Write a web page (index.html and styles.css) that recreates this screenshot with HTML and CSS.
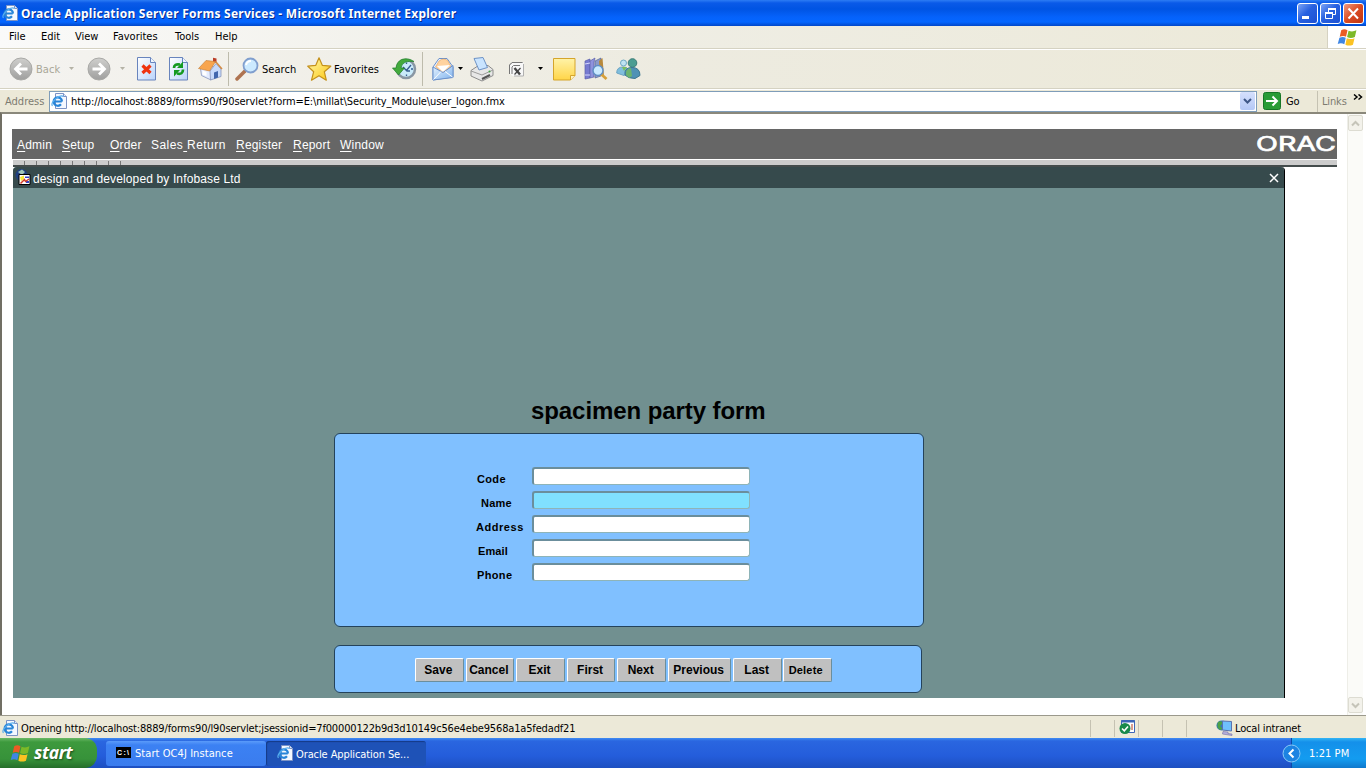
FILE: index.html
```html
<!DOCTYPE html>
<html lang="en">
<head>
<meta charset="utf-8">
<title>Oracle Application Server Forms Services - Microsoft Internet Explorer</title>
<link rel="stylesheet" href="styles.css">
</head>
<body>
<svg class="defs" width="0" height="0">
  <defs>
    <linearGradient id="gGrey" x1="0" y1="0" x2="0" y2="1"><stop offset="0" stop-color="#cfcfcd"/><stop offset="1" stop-color="#9f9f9e"/></linearGradient>
    <linearGradient id="gPage" x1="0" y1="0" x2="1" y2="1"><stop offset="0" stop-color="#fff"/><stop offset="1" stop-color="#b9d3fb"/></linearGradient>
    <linearGradient id="gStar" x1="0" y1="0" x2="1" y2="1"><stop offset="0" stop-color="#fffbb0"/><stop offset="1" stop-color="#fdc60f"/></linearGradient>
    <linearGradient id="gNote" x1="0" y1="0" x2="0" y2="1"><stop offset="0" stop-color="#fff3a8"/><stop offset="1" stop-color="#ffd548"/></linearGradient>
    <linearGradient id="gMail" x1="0" y1="0" x2="1" y2="1"><stop offset="0" stop-color="#e6f3ff"/><stop offset="1" stop-color="#7fb2ec"/></linearGradient>
    <symbol id="iePage" viewBox="0 0 16 16">
      <path d="M4.500.5h8l3 3v12h-11z" fill="#f4f8ff" stroke="#7d93c4"/><path d="M12.500.5v3h3" fill="#dce8fa" stroke="#7d93c4"/>
      <path d="M10.800 8.500H3.500M11 8.500A4.200 4.200 0 1 0 10 11.300" fill="none" stroke="#2784d8" stroke-width="2.200"/><path d="M1.500 13Q-.5 10.500 4.500 6T12.500 3.500" fill="none" stroke="#5aaeee" stroke-width="1.200"/>
    </symbol>
    <symbol id="flag" viewBox="0 0 20 18">
      <path d="M4 2Q7 .3 10 2L8.600 8.200Q6 6.800 2.600 8.200z" fill="#ea5b24"/><path d="M11 2.500Q14.500 4 18.500 2.200L17 8.600Q13 10.200 9.600 8.600z" fill="#7cb928"/>
      <path d="M2.300 9.200Q5.500 7.800 8.300 9.200L7 15.400Q4 13.800.7 15.200z" fill="#3f86e4"/><path d="M9.300 9.700Q13 11.200 16.700 9.600L15.200 15.800Q11.500 17.600 8 15.900z" fill="#fbc222"/>
    </symbol>
  </defs>
</svg>
<div class="desktop">
  <header class="titlebar">
    <svg class="title-icon" width="16" height="16"><use href="#iePage"/></svg>
    <span class="title-text">Oracle Application Server Forms Services - Microsoft Internet Explorer</span>
    <div class="win-buttons">
      <span class="win-btn"><svg width="19" height="19"><path d="M4 13.500h7" stroke="#fff" stroke-width="3"/></svg></span>
      <span class="win-btn"><svg width="19" height="19" fill="none" stroke="#fff"><path d="M7.500 8V4.500h7v6H12"/><path d="M7 5h8" stroke-width="2"/><path d="M4.500 8.500h7v6h-7z"/><path d="M4 9h8" stroke-width="2"/></svg></span>
      <span class="win-btn close"><svg width="19" height="19"><path d="M4.500 4.500l9.500 10M14 4.500l-9.500 10" stroke="#fff" stroke-width="2"/></svg></span>
    </div>
  </header>

  <nav class="menubar">
    <span>File</span><span>Edit</span><span>View</span><span>Favorites</span><span>Tools</span><span>Help</span>
    <div class="throbber"><svg width="21" height="19"><use href="#flag"/></svg></div>
  </nav>

  <div class="toolbar">
    <svg width="24" height="24"><circle cx="12" cy="12" r="11" fill="url(#gGrey)" stroke="#a9a9a6"/><path d="M18.500 12H7M12 6.500L6.500 12l5.500 5.500" stroke="#fff" stroke-width="2.800" fill="none"/></svg>
    <span class="off">Back</span>
    <svg width="6" height="4"><path d="M0 0h5L2.500 3z" fill="#b4b2a6"/></svg>
    <svg width="24" height="24"><circle cx="12" cy="12" r="11" fill="url(#gGrey)" stroke="#a9a9a6"/><path d="M5.500 12H17M12 6.500L17.500 12 12 17.500" stroke="#fff" stroke-width="2.800" fill="none"/></svg>
    <svg width="6" height="4"><path d="M0 0h5L2.500 3z" fill="#b4b2a6"/></svg>
    <svg width="20" height="24"><path d="M.5.5h13l5 5v17.500H.5z" fill="url(#gPage)" stroke="#6884bd"/><path d="M13.500.5v5h5" fill="#eef5ff" stroke="#6884bd"/><path d="M5.500 8.500l8 7.500M13.500 8.500l-8 7.500" stroke="#ef3310" stroke-width="3.200"/></svg>
    <svg width="20" height="24"><path d="M.5.5h13l5 5v17.500H.5z" fill="url(#gPage)" stroke="#6884bd"/><path d="M13.500.5v5h5" fill="#eef5ff" stroke="#6884bd"/><path d="M5 11Q5 6.500 11 7.500M14 12.500Q14 18 8 16.500" stroke="#159a22" stroke-width="2.700" fill="none"/><path d="M14 4.500v6.500H8zM5 19.500V13h6z" fill="#159a22"/></svg>
    <svg width="25" height="24"><path d="M2.500 11.500L9 5l9 7-5 11-9.500-4.500z" fill="#e4ecff" stroke="#8694ba" stroke-width=".8"/><path d="M12 14l6-7.500 5 5.500v7.500L12.500 23z" fill="#c7dafb" stroke="#8694ba" stroke-width=".8"/><path d="M15 .8l3.500.7V6L15 5z" fill="#bb3e27"/><path d="M.5 11.500L8 3.500l9.500 1L11.500 14z" fill="#f8a54e" stroke="#c17a34" stroke-width=".6"/><path d="M17.500 4.500l6.500 7.500" stroke="#d48b43" stroke-width="1.500"/><path d="M16 15.500l4-1.500v6.500L16 22z" fill="#4267ad"/><path d="M4.500 13.500l4 1.500v4l-4-1.500z" fill="#fff"/></svg>
    <i class="sep"></i>
    <svg width="24" height="24"><path d="M10 14L2 22" stroke="#ae7350" stroke-width="3.500" stroke-linecap="round"/><circle cx="15.500" cy="8.500" r="7" fill="#cceaff" stroke="#819fce" stroke-width="1.800"/><path d="M11 8q1-4 5-4" fill="none" stroke="#fff" stroke-width="2"/></svg>
    <span>Search</span>
    <svg width="25" height="24"><path d="M12 .8l3.300 7.500 8.500.9-6.500 5.500 2 8.500-7.300-4.500-7.500 4.500 2.200-8.500L.8 9.200l8-.9z" fill="url(#gStar)" stroke="#c4911c" stroke-width="1.200" stroke-linejoin="round"/></svg>
    <span>Favorites</span>
    <svg width="25" height="24"><circle cx="14" cy="12" r="9" fill="#c9eafa" stroke="#8996a3" stroke-width="2.500"/><path d="M14 14l5-6M11 10l4 4h3M14.500 5.500v1.500M21 12h-2M14.500 19v-1.500" stroke="#355d90" stroke-width="1.300" fill="none"/><path d="M22 4.500Q16 .3 9.500 2.500 4.500 5 4 11H.5L6.500 18l6-7H9Q9.500 7 13 5.300q4-1.500 9-.8" fill="#43aa3c" stroke="#1c7d29" stroke-width=".7"/></svg>
    <i class="sep"></i>
    <svg width="23" height="24"><path d="M1 10L7 1.500h8l6 8.500v10L1 23z" fill="#ebf3ff" stroke="#6b91cb"/><path d="M3.500 10L7 4q5-4 9 0l3 6-8 6z" fill="#ffd3a0" stroke="#e4a159" stroke-width=".6"/><path d="M5 9l13-1-7 7z" fill="#fff"/><path d="M1 10l10 5.500L21 8.500v12L1 23z" fill="url(#gMail)" stroke="#6b91cb"/><path d="M1.500 22.500l7.500-8M20.500 20L13 14.500" stroke="#fff"/></svg>
    <svg width="6" height="4"><path d="M0 0h5L2.500 3z"/></svg>
    <svg width="24" height="25"><path d="M1 13.500l6-4 11-1 5 4v6l-11 5.500L1 19z" fill="#e7e7e7" stroke="#8c8c8c"/><path d="M4 1.500L13 .5l4.500 10L9 13z" fill="#c9e4ff" stroke="#6d92c5"/><path d="M1 14l11 4 11-5" fill="none" stroke="#9b9b9b"/><path d="M12 22l8-4" fill="none" stroke="#555" stroke-width="2"/><circle cx="19.500" cy="14.500" r="1" fill="#41a541"/></svg>
    <svg width="17" height="17" fill="none"><path d="M4.500 1h11v14h-11L1.500 12V4z" fill="#f8f8f8"/><path d="M1.500 13V4l3-2.500h10M15.500 3v12H6" stroke="#b0b0b0"/><path d="M1.500 13V4L4 1.500h10.500M4 13V6l1.500-1.500H12" stroke="#777"/><path d="M6.500 7l5.500 6.500" stroke="#444" stroke-width="2.400"/><path d="M12.500 7l-6 6.500" stroke="#444" stroke-width="1.200"/></svg>
    <svg width="6" height="4"><path d="M0 0h5L2.500 3z"/></svg>
    <svg width="23" height="23"><path d="M.5.5h21.500v17l-4.500 4.500H.5z" fill="url(#gNote)" stroke="#d5a52b"/><path d="M17.500 22v-4.500H22" fill="#fff3bd" stroke="#d5a52b"/></svg>
    <svg width="24" height="24"><path d="M1 4l5-2v19l-5 1z" fill="#777bd1" stroke="#5a5eaa" stroke-width=".7"/><path d="M6 4l5-3-1 4v15l-4 1z" fill="#8f93dd" stroke="#5a5eaa" stroke-width=".7"/><path d="M1 7l5-1M1 18h5" stroke="#d5d7ff"/><path d="M11 4l6-3v18l-6 2z" fill="#8b9bca" stroke="#586598" stroke-width=".7"/><path d="M15 4l3.500-3 1.500 18h-4z" fill="#b8893c"/><path d="M17 17l5.500 5" stroke="#d6a03a" stroke-width="2.800"/><circle cx="14" cy="13.500" r="5" fill="#c9eaff" stroke="#608fc4" stroke-width="1.500"/></svg>
    <svg width="25" height="24"><circle cx="7.500" cy="6" r="3" fill="#bfe3f2" stroke="#6fa9c3"/><path d="M.7 16q0-6 6.300-6t5 6l-4 2.500z" fill="#7fbedd" stroke="#6ca4c3"/><path d="M6 10l2 4 3-4z" fill="#79bf5b"/><circle cx="16.500" cy="6" r="4.300" fill="#4c9d92" stroke="#397b76"/><path d="M9 18q-1-7.500 7-7.500t8 8l-5 3q-7 0-10-3.500z" fill="#4f92b5" stroke="#3b7690"/><path d="M10 18q-1-6 5-7l1 8-3 2z" fill="#6cb46e"/></svg>
  </div>

  <div class="addressbar">
    <span class="addr-label">Address</span>
    <div class="addr-field">
      <svg width="16" height="16"><use href="#iePage"/></svg>
      <span class="url">http://localhost:8889/forms90/f90servlet?form=E:\millat\Security_Module\user_logon.fmx</span>
      <span class="dropdown"><svg width="9" height="7"><path d="M1 1l3.500 3.500L8 1" fill="none" stroke="#3e5787" stroke-width="2"/></svg></span>
    </div>
    <svg class="go-icon" width="18" height="18"><rect x=".5" y=".5" width="17" height="17" rx="2" fill="#299b35" stroke="#167626"/><path d="M3 9h11M9.500 4.500L14 9l-4.500 4.500" fill="none" stroke="#fff" stroke-width="2"/></svg>
    <span class="go">Go</span>
    <span class="links">Links</span>
    <svg class="chevrons" width="10" height="7"><path d="M1 .5L4 3 1 5.500M5.500.5L8.500 3l-3 2.500" fill="none" stroke="#000" stroke-width="1.500"/></svg>
  </div>

  <main class="viewport">
    <div class="page">
      <div class="applet">
        <nav class="forms-menu">
          <span><u>A</u>dmin</span><span><u>S</u>etup</span><span><u>O</u>rder</span><span>Sales<u>&nbsp;</u>Return</span><span><u>R</u>egister</span><span><u>R</u>eport</span><span><u>W</u>indow</span>
          <svg class="logo" width="81" height="22"><text x="0" y="18" textLength="80" lengthAdjust="spacingAndGlyphs">ORAC</text></svg>
        </nav>
        <div class="ruler"><i></i><i></i><i></i><i></i><i></i><i></i><i></i><i></i><i></i></div>
        <section class="mdi">
          <div class="mdi-title">
            <svg width="17" height="17"><circle cx="6.500" cy="6" r="6" fill="#1f3f80"/><path d="M3 3l4-2.500L10 3 7 6z" fill="#9ec6ba"/><path d="M4 5.500h11v10H4z" fill="#fff" stroke="#000"/><path d="M5 8l4-1.500V10l-3 2z" fill="#f6e837"/><path d="M10 7.500h4V9h-4zM11 12h3v2h-3z" fill="#3442c8"/><path d="M5.500 14.500l4-4 1 2 3.500-2.500" stroke="#d33a26" stroke-width="1.500" fill="none"/></svg>
            <span>design and developed by Infobase Ltd</span>
            <svg class="mdi-close" width="10" height="10"><path d="M1 1l8 8M9 1L1 9" stroke="#fff" stroke-width="1.500"/></svg>
          </div>
          <div class="canvas">
            <h1>spacimen party form</h1>
            <div class="panel form">
              <label class="code"><span>Code</span><input></label>
              <label class="name"><span>Name</span><input></label>
              <label class="address"><span>Address</span><input></label>
              <label class="email"><span>Email</span><input></label>
              <label class="phone"><span>Phone</span><input></label>
            </div>
            <div class="panel actions">
              <button>Save</button><button>Cancel</button><button>Exit</button><button>First</button><button>Next</button><button class="wide">Previous</button><button>Last</button><button class="small">Delete</button>
            </div>
          </div>
        </section>
      </div>
    </div>
    <div class="scrollbar">
      <span><svg width="9" height="7"><path d="M1 5.500L4.500 2 8 5.500" fill="none" stroke="#c5c4b9" stroke-width="2"/></svg></span>
      <span><svg width="9" height="7"><path d="M1 1.500L4.500 5 8 1.500" fill="none" stroke="#c5c4b9" stroke-width="2"/></svg></span>
    </div>
  </main>

  <footer class="statusbar">
    <svg width="16" height="16"><use href="#iePage"/></svg>
    <span class="status-text">Opening http://localhost:8889/forms90/l90servlet;jsessionid=7f00000122b9d3d10149c56e4ebe9568a1a5fedadf21</span>
    <i class="cell"></i>
    <i class="cell"><svg width="17" height="16"><path d="M2.500 1.500h13v12h-13z" fill="#fff" stroke="#3d66b8"/><path d="M2 2.500h14" stroke="#3d66b8" stroke-width="2"/><path d="M12 5h2v6h-2z" fill="#d99b8e"/><circle cx="6" cy="9.500" r="5.500" fill="#198a4a"/><path d="M3 9.500l2.300 2.300L9 7.500" fill="none" stroke="#fff" stroke-width="1.600"/></svg></i>
    <i class="cell"></i><i class="cell"></i><i class="cell"></i>
    <span class="zone"><svg width="17" height="16"><circle cx="5.500" cy="5.500" r="5" fill="#3477b8"/><path d="M2 2q4-2 5 1L4 6l3 3-3 1Q0 7 2 2z" fill="#4ca247"/><path d="M6.500 1l9 .5v9.500l-9-1z" fill="#6fc0fc" stroke="#5972ae"/><path d="M7 11.500l5 .5v1.500l4 .5v1.500L6.500 14z" fill="#b5b0dc" stroke="#746fa4" stroke-width=".6"/></svg><span>Local intranet</span></span>
  </footer>

  <div class="taskbar">
    <div class="start"><svg width="21" height="19"><use href="#flag"/></svg><span>start</span></div>
    <div class="task"><svg width="16" height="12"><rect width="15" height="11" fill="#000"/><text class="cmd" x="1" y="8" textLength="12">C:\</text></svg><span class="task-wide">Start OC4J Instance</span></div>
    <div class="task active"><svg width="16" height="16"><use href="#iePage"/></svg><span>Oracle Application Se...</span></div>
    <div class="tray"><svg class="tray-arrow" width="19" height="19"><circle cx="9.500" cy="9.500" r="8.500" fill="#1c83e2" stroke="#8ccaf6"/><path d="M11.500 5.500l-4 4 4 4" fill="none" stroke="#fff" stroke-width="2"/></svg><span>1:21 PM</span></div>
  </div>
</div>
</body>
</html>
```

FILE: styles.css
```css
* { box-sizing: border-box; }
body { margin: 0; overflow: hidden; font: 11px/14px "DejaVu Sans Condensed", "DejaVu Sans", sans-serif; font-stretch: condensed; letter-spacing: -0.15px; color: #000; white-space: nowrap; }
.defs { position: absolute; }
.desktop { width: 1366px; height: 768px; display: flex; flex-direction: column; background: #ece9d8; overflow: hidden; }
svg { display: block; flex: none; }

.titlebar { height: 26px; flex: none; display: flex; align-items: center; padding: 0 4px 0 2px; background: linear-gradient(#2c7cf4 0, #0a5ae8 3px, #0054e3 9px, #0562fb 17px, #0466ff 22px, #0247c8 26px); }
.title-icon { margin-right: 3px; }
.title-text { padding-top: 1px; font: bold 12px/16px "Noto Sans", sans-serif; letter-spacing: 0.25px; color: #fff; text-shadow: 1px 1px #0a2c8c; }
.win-buttons { margin: 0 -2px 0 auto; display: flex; gap: 2px; }
.win-btn { width: 21px; height: 21px; border: 1px solid #fff; border-radius: 3px; background: linear-gradient(135deg, #7ca4f6, #2861e0 45%, #1c50d2); }
.close { background: linear-gradient(135deg, #f09a80, #db4b22 50%, #bd3412); }

.menubar { height: 23px; flex: none; display: grid; grid-template-columns: 32px 34px 38px 62px 40px 1fr 39px; align-items: center; padding-left: 9px; background: linear-gradient(90deg, #fafaf9, #efeee6 40%, #ece9d8); border-bottom: 1px solid #d5d2c2; letter-spacing: 0; }
.menubar span { margin-top: -1px; }
.throbber { height: 22px; background: #fff; border-left: 1px solid #d5d2c2; display: flex; align-items: center; padding-left: 9px; }

.toolbar { height: 40px; flex: none; display: grid; grid-template-columns: 27px 33px 18px 33px 17px 32px 29px 30px 7px 27px 45px 27px 58px 30px 10px 26px 12px 38px 30px 15px 31px 32px 26px; align-items: center; padding-left: 9px; border-top: 1px solid #fff; border-bottom: 1px solid #d5d2c2; background: linear-gradient(90deg, #f4f3f0, #edebe0 50%, #ece9d8); }
.toolbar span { letter-spacing: 0.05px; padding-top: 1px; }
.sep { width: 1px; height: 34px; background: #bdbbac; }
.off { color: #a9a798; }

.addressbar { height: 23px; flex: none; display: flex; align-items: center; border-top: 1px solid #fff; background: #ece9d8; }
.addr-label { width: 49px; padding: 1px 0 0 5px; color: #7d7b70; letter-spacing: 0; }
.addr-field { width: 1208px; height: 21px; border: 1px solid #7f9db9; background: #fff; display: flex; align-items: center; padding: 0 1px; }
.url { margin-left: 4px; padding-top: 2px; letter-spacing: -0.1px; }
.dropdown { margin-left: auto; width: 15px; height: 18px; border-radius: 2px; background: linear-gradient(#d5e0fc, #b4c8f6); display: flex; align-items: center; justify-content: center; }
.go-icon { margin-left: 6px; }
.go { margin-left: 5px; width: 31px; padding-top: 1px; }
.links { color: #7d7b70; border-left: 1px solid #c5c2b2; padding: 1px 0 0 4px; width: 36px; line-height: 20px; }
.chevrons { margin-bottom: 8px; }

.viewport { height: 603px; flex: none; display: flex; background: #fff; border: solid #716f64; border-width: 2px 0 0 2px; border-top-color: #8a887b; }
.page { width: 1345px; height: 601px; padding: 15px 0 0 10px; }
.applet { width: 1325px; height: 569px; overflow: hidden; }
.forms-menu { height: 30px; background: #666; color: #fff; display: grid; grid-template-columns: 45px 48px 41px 85px 57px 47px 916px 81px; padding-left: 5px; align-items: center; font: 12px/16px "Liberation Sans", sans-serif; letter-spacing: 0.2px; }
.forms-menu span { padding-top: 2px; }
.forms-menu span:nth-child(4) { letter-spacing: 0.45px; }
.forms-menu u { text-underline-offset: 2px; }
.logo text { font: 20.500px "Inter", "Liberation Sans", sans-serif; fill: #fff; stroke: #fff; stroke-width: 0.7px; letter-spacing: 0; }
.ruler { height: 8px; margin-left: 1px; border-top: 1px solid #fff; border-bottom: 2px solid #444c4c; background: #ccc; display: flex; gap: 11px; padding-left: 11px; align-items: center; }
.ruler i { width: 1px; height: 4px; background: #777; }
.mdi { width: 1272px; height: 540px; margin: 0 0 0 1px; border-right: 1px solid #000; background: #719090; border-radius: 4px 4px 0 0; }
.mdi-title { height: 21px; background: #364a4c; border-radius: 4px 4px 0 0; display: flex; align-items: center; padding-left: 2px; color: #fff; font: 12px/16px "Liberation Sans", sans-serif; letter-spacing: 0.13px; }
.mdi-title span { margin-left: 1px; padding-top: 2px; }
.mdi-close { margin: 0 5px 0 auto; }
.canvas { height: 510px; padding-left: 321px; }
h1 { margin: 0; padding: 208px 0 0 197px; height: 245px; font: bold 24px/30px "Liberation Sans", sans-serif; letter-spacing: -0.08px; }
.panel { background: #80c0ff; border: 1px solid #24435c; border-radius: 6px; }
.form { width: 590px; height: 194px; padding: 33px 0 0 141px; display: flex; flex-direction: column; gap: 6px; }
.form label { height: 18px; display: flex; font: bold 11px/15px "Liberation Sans", sans-serif; letter-spacing: 0.35px; }
.form label span { width: 56px; padding: 5px 0 0 1px; }
.form .name span { padding-left: 5px; letter-spacing: 0.2px; }
.form .address span { padding-left: 0; letter-spacing: 0.55px; }
.form .email span { padding-left: 2px; letter-spacing: 0.1px; }
.form input { width: 218px; height: 18px; margin: 0; padding: 0 3px; border: 1px solid #8eb4b8; border-top: 2px solid #6b8e9c; border-left: 2px solid #6b8e9c; border-radius: 3px; background: #fff; outline: 0; }
.form .name input { background: #80e0ff; }
.actions { width: 588px; height: 48px; margin-top: 18px; display: flex; gap: 2px; padding: 12px 0 0 80px; }
.actions button { flex: none; width: 48.600px; height: 24px; padding: 0 2px 0 0; border: 1px solid #fff; border-right-color: #6b8e9c; border-bottom-color: #6b8e9c; border-radius: 2px; background: #c0c0c0; color: #000; font: bold 12px/16px "Liberation Sans", sans-serif; }
.actions button.wide { width: 63.400px; }
.actions button.small { font-size: 11px; letter-spacing: 0.2px; margin-left: -1px; padding-right: 3px; }
.scrollbar { width: 16px; display: flex; flex-direction: column; justify-content: space-between; padding: 1px 0 2px; background: #fbfbf8; border-left: 1px solid #eeeee8; }
.scrollbar span { width: 15px; height: 16px; border: 1px solid #dddcd2; border-radius: 2px; background: #f3f2eb; display: flex; align-items: center; justify-content: center; }

.statusbar { height: 23px; flex: none; border-top: 1px solid #9b998c; display: flex; align-items: center; padding: 2px 0 0 2px; }
.status-text { margin-left: 3px; padding-top: 1px; width: 1069px; letter-spacing: -0.16px; }
.cell { width: 24px; height: 17px; border-left: 1px solid #c5c2b2; padding-left: 4px; }
.cell svg { margin-top: -1px; }
.zone { display: flex; align-items: center; gap: 2px; margin-left: 6px; }
.zone span { padding-top: 1px; }

.taskbar { height: 30px; flex: none; display: flex; align-items: center; color: #fff; background: linear-gradient(#3f8cf3 0, #2a66e0 3px, #245ddb 60%, #1d4fc0); }
.start { width: 97px; height: 30px; border-radius: 0 12px 12px 0; background: linear-gradient(#6bb968 0, #3d9a3d 4px, #37923a 70%, #256e2a); display: flex; align-items: center; padding-left: 10px; gap: 3px; font: italic bold 17.500px/24px "Open Sans", sans-serif; letter-spacing: -0.4px; text-shadow: 1px 1px 2px #1a4a1a; margin-right: 9px; }
.start span { margin-top: -2px; }
.task { width: 160px; height: 25px; border-radius: 3px; background: linear-gradient(#5b9bfa, #3c81f3 4px, #3a7cee); display: flex; align-items: center; padding-left: 10px; gap: 3px; letter-spacing: -0.1px; }
.task span { padding-top: 1px; }
.task-wide { letter-spacing: 0.07px; }
.active { background: #1e52b7; box-shadow: inset 1px 1px 1px #143a87; padding-left: 11px; }
.active span { padding-top: 3px; }
.cmd { font: bold 7px "Liberation Sans", sans-serif; fill: #fff; letter-spacing: 0; }
.tray { margin-left: auto; width: 75px; height: 30px; background: linear-gradient(#33b5f5 0, #1490ea 4px, #139cf0 70%, #0f78cc); border-left: 1px solid #0c4aa8; display: flex; align-items: center; }
.tray-arrow { margin: 0 8px 0 -10px; }
.tray span { padding-top: 1px; letter-spacing: 0.05px; }
```
